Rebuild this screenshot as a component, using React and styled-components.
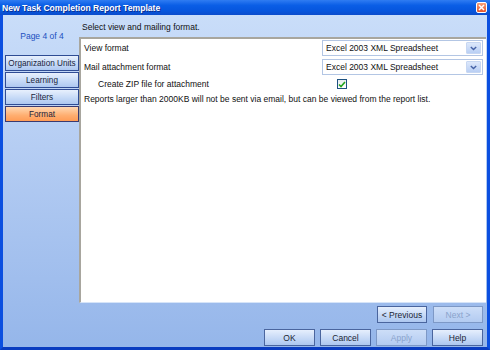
import React from "react";
import styled, { createGlobalStyle } from "styled-components";

const Global = createGlobalStyle`
  html, body { margin: 0; padding: 0; background: #fff; }
  body { font-family: "Liberation Sans", Arial, sans-serif; }
  * { box-sizing: border-box; }
`;

const Window = styled.div`
  width: 490px;
  height: 350px;
  display: flex;
  flex-direction: column;
  overflow: hidden;
`;

const TitleBar = styled.div`
  height: 15px;
  flex: none;
  display: flex;
  align-items: center;
  justify-content: space-between;
  padding: 0 3px 0 2px;
  background: linear-gradient(#2f7cf2 0%, #0a5ee6 35%, #0656de 70%, #0a4ccc 100%);
  color: #fff;
  font-weight: bold;
  font-size: 8.6px;
  text-shadow: 1px 1px 0 #0a2f90;
`;

const CloseBtn = styled.div`
  width: 11px;
  height: 11px;
  border: 1px solid #fff;
  border-radius: 2px;
  background: linear-gradient(#f7a07a, #e5542a);
  display: flex;
  align-items: center;
  justify-content: center;
`;

const Frame = styled.div`
  flex: 1;
  display: flex;
  flex-direction: column;
  border-left: 3px solid #0b4fe0;
  border-right: 3px solid #0b4fe0;
  border-bottom: 3px solid #0a3cc0;
  background: linear-gradient(#c9ddf9 0%, #b5cdf3 40%, #95b6ea 100%);
`;

const Content = styled.div`
  height: 288px;
  display: flex;
`;

const Sidebar = styled.div`
  width: 76px;
  flex: none;
  display: flex;
  flex-direction: column;
  padding-left: 2px;
`;

const PageLabel = styled.div`
  height: 40px;
  display: flex;
  align-items: center;
  justify-content: center;
  padding-top: 1px;
  color: #2050c0;
  font-size: 8.5px;
`;

const Tabs = styled.div`
  display: flex;
  flex-direction: column;
  gap: 1px;
  width: 74px;
`;

const Tab = styled.div`
  height: 16px;
  display: flex;
  align-items: center;
  justify-content: center;
  white-space: nowrap;
  font-size: 8.2px;
  color: #1a1f3c;
  border: 1px solid ${(p) => (p.$active ? "#3a3a70" : "#2f4c94")};
  background: ${(p) =>
    p.$active
      ? "linear-gradient(#ffd8b2, #ffae70 60%, #ff9c56)"
      : "linear-gradient(#e8f0fd, #c6daf7 55%, #aec8f0)"};
`;

const Main = styled.div`
  flex: 1;
  display: flex;
  flex-direction: column;
  margin-right: 1px;
`;

const Header = styled.div`
  height: 22px;
  display: flex;
  align-items: center;
  padding-left: 3px;
  padding-top: 2px;
  font-size: 8.5px;
  color: #111;
`;

const Panel = styled.div`
  flex: 1;
  background: #fff;
  border-top: 2px solid #a8a69e;
  border-left: 2px solid #a8a69e;
  border-bottom: 1px solid #d6e4f8;
  padding: 1px 3px 0 3px;
  display: flex;
  flex-direction: column;
  font-size: 8.5px;
  color: #111;
`;

const FormRow = styled.div`
  display: grid;
  grid-template-columns: 1fr 161px;
  align-items: center;
  height: ${(p) => p.$h || 16}px;
  margin-bottom: ${(p) => p.$mb || 0}px;
`;

const Label = styled.div`
  padding-left: ${(p) => p.$indent || 0}px;
`;

const Select = styled.div`
  height: 16px;
  border: 1px solid #b3c6e4;
  display: flex;
  align-items: center;
  justify-content: space-between;
  padding: 1px 1px 1px 3px;
  background: #fff;
`;

const ArrowBtn = styled.div`
  width: 15px;
  height: 12px;
  border-radius: 1px;
  background: linear-gradient(#dde8fb, #b9cff4);
  border: 1px solid #c7d7f2;
  display: flex;
  align-items: center;
  justify-content: center;
`;

const Checkbox = styled.div`
  width: 10px;
  height: 10px;
  margin-left: 15px;
  border: 1px solid #1d5281;
  background: linear-gradient(#e6ecef, #fff);
  display: flex;
  align-items: center;
  justify-content: center;
`;

const Note = styled.div`
  height: 16px;
  display: flex;
  align-items: center;
`;

const Footer = styled.div`
  height: 44px;
  display: flex;
  flex-direction: column;
  gap: 6px;
  padding: 3px 4px 0 0;
`;

const ButtonRow = styled.div`
  display: flex;
  justify-content: flex-end;
  gap: ${(p) => p.$gap || 5}px;
`;

const Button = styled.div`
  width: ${(p) => p.$w || 51}px;
  height: 17px;
  display: flex;
  align-items: center;
  justify-content: center;
  font-size: 8.5px;
  color: ${(p) => (p.$disabled ? "#8aa3cc" : "#1b1f33")};
  border: 1px solid ${(p) => (p.$disabled ? "#7d98c6" : "#4a659e")};
  background: ${(p) =>
    p.$disabled
      ? "linear-gradient(#cddef8, #b3cbf1)"
      : "linear-gradient(#e6effd, #c6d9f6 55%, #adc7f0)"};
`;

const Chevron = () => (
  <svg width="7" height="5" viewBox="0 0 7 5">
    <path d="M0.8 1 L3.5 3.6 L6.2 1" fill="none" stroke="#4662a6" strokeWidth="1.4" />
  </svg>
);

const SelectBox = ({ value }) => (
  <Select>
    <span>{value}</span>
    <ArrowBtn>
      <Chevron />
    </ArrowBtn>
  </Select>
);

export default function App() {
  return (
    <>
      <Global />
      <Window>
        <TitleBar>
          <span>New Task Completion Report Template</span>
          <CloseBtn>
            <svg width="7" height="7" viewBox="0 0 7 7">
              <path d="M1 1 L6 6 M6 1 L1 6" stroke="#fff" strokeWidth="1.5" />
            </svg>
          </CloseBtn>
        </TitleBar>
        <Frame>
          <Content>
            <Sidebar>
              <PageLabel>Page 4 of 4</PageLabel>
              <Tabs>
                <Tab>Organization Units</Tab>
                <Tab>Learning</Tab>
                <Tab>Filters</Tab>
                <Tab $active>Format</Tab>
              </Tabs>
            </Sidebar>
            <Main>
              <Header>Select view and mailing format.</Header>
              <Panel>
                <FormRow $mb={3}>
                  <Label>View format</Label>
                  <SelectBox value="Excel 2003 XML Spreadsheet" />
                </FormRow>
                <FormRow $mb={2}>
                  <Label>Mail attachment format</Label>
                  <SelectBox value="Excel 2003 XML Spreadsheet" />
                </FormRow>
                <FormRow $h={14}>
                  <Label $indent={14}>Create ZIP file for attachment</Label>
                  <Checkbox>
                    <svg width="8" height="7" viewBox="0 0 8 7">
                      <path d="M1 3.5 L3 5.5 L7 1" fill="none" stroke="#22a51c" strokeWidth="1.6" />
                    </svg>
                  </Checkbox>
                </FormRow>
                <Note>
                  Reports larger than 2000KB will not be sent via email, but can be viewed from the report list.
                </Note>
              </Panel>
            </Main>
          </Content>
          <Footer>
            <ButtonRow $gap={6}>
              <Button $w={50}>&lt; Previous</Button>
              <Button $w={50} $disabled>Next &gt;</Button>
            </ButtonRow>
            <ButtonRow>
              <Button>OK</Button>
              <Button>Cancel</Button>
              <Button $disabled>Apply</Button>
              <Button>Help</Button>
            </ButtonRow>
          </Footer>
        </Frame>
      </Window>
    </>
  );
}
